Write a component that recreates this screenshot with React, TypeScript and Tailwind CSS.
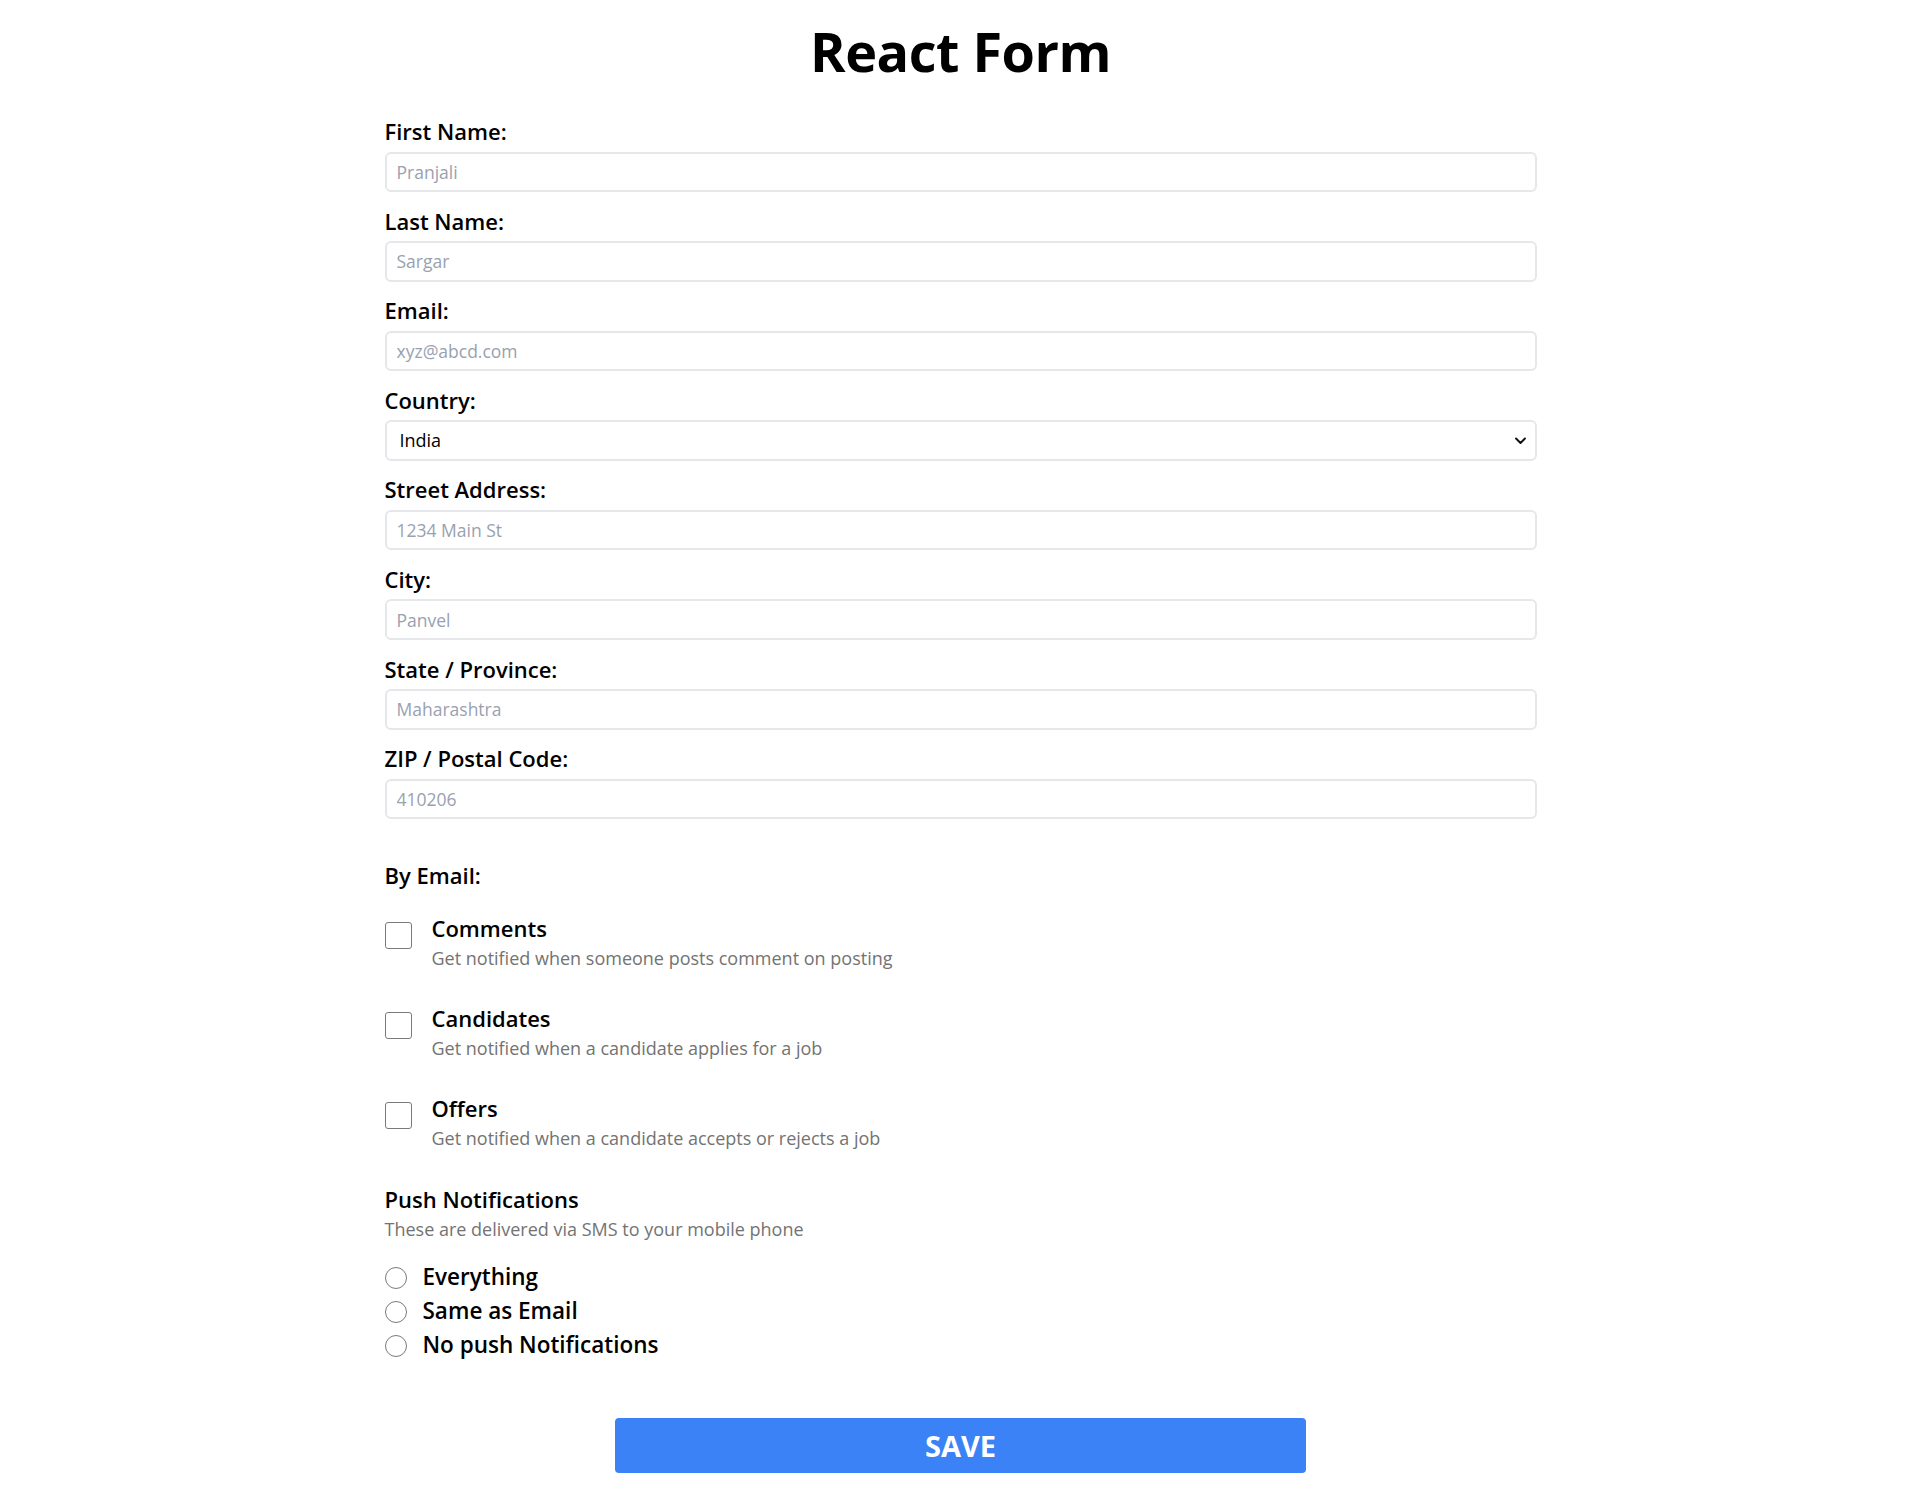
import React from "react";

const fields: { label: string; placeholder: string; type?: string }[] = [
  { label: "First Name:", placeholder: "Pranjali" },
  { label: "Last Name:", placeholder: "Sargar" },
  { label: "Email:", placeholder: "xyz@abcd.com" },
  { label: "Country:", placeholder: "", type: "select" },
  { label: "Street Address:", placeholder: "1234 Main St" },
  { label: "City:", placeholder: "Panvel" },
  { label: "State / Province:", placeholder: "Maharashtra" },
  { label: "ZIP / Postal Code:", placeholder: "410206" },
];

const checks = [
  { title: "Comments", desc: "Get notified when someone posts comment on posting" },
  { title: "Candidates", desc: "Get notified when a candidate applies for a job" },
  { title: "Offers", desc: "Get notified when a candidate accepts or rejects a job" },
];

const radios = ["Everything", "Same as Email", "No push Notifications"];

export default function App() {
  return (
    <div className="min-h-screen bg-white text-black font-['Open_Sans','Noto_Sans',sans-serif]">
      <div className="max-w-6xl mx-auto pb-[20px]">
        <h1 className="text-center text-[54px] font-bold leading-[64px] pt-[19px] mb-[32px] tracking-[-0.5px]">
          React Form
        </h1>
        <form className="flex flex-col" onSubmit={(e) => e.preventDefault()}>
          <div className="flex flex-col gap-[12.6px]">
            {fields.map((f) => (
              <div key={f.label} className="flex flex-col">
                <label className="text-[22px] font-semibold leading-[32px] mb-[4.5px]">{f.label}</label>
                {f.type === "select" ? (
                  <div className="relative">
                    <select
                      defaultValue="India"
                      className="appearance-none w-full h-[40.5px] border-2 border-gray-200 rounded-md pl-[13px] text-[18px] text-black bg-white outline-none"
                    >
                      <option>India</option>
                      <option>USA</option>
                      <option>UK</option>
                    </select>
                    <svg
                      className="absolute right-[10px] top-[14px] pointer-events-none"
                      width="13"
                      height="13"
                      viewBox="0 0 16 16"
                      fill="none"
                    >
                      <path d="M2.5 5.5 8 11l5.5-5.5" stroke="#111" strokeWidth="2.4" strokeLinecap="round" strokeLinejoin="round" />
                    </svg>
                  </div>
                ) : (
                  <input
                    type="text"
                    placeholder={f.placeholder}
                    className="w-full h-[40.5px] border-2 border-gray-200 rounded-md px-[10px] text-[17.5px] placeholder:text-gray-400 outline-none"
                  />
                )}
              </div>
            ))}
          </div>

          <p className="mt-[40.3px] text-[22px] font-semibold leading-[32px]">By Email:</p>

          <div className="mt-[21px] flex flex-col gap-[29.6px]">
            {checks.map((c) => (
              <label key={c.title} className="flex gap-[20px]">
                <input
                  type="checkbox"
                  className="appearance-none mt-[10px] w-[27px] h-[27px] shrink-0 border border-[#7a7a7a] rounded-[3px] bg-white"
                />
                <div className="flex flex-col">
                  <span className="text-[22px] font-semibold leading-[32px]">{c.title}</span>
                  <span className="text-[18px] leading-[28px] text-[#737373]">{c.desc}</span>
                </div>
              </label>
            ))}
          </div>

          <p className="mt-[31.5px] text-[22px] font-semibold leading-[32px]">Push Notifications</p>
          <p className="text-[18px] leading-[28px] text-[#737373]">These are delivered via SMS to your mobile phone</p>

          <div className="mt-[17.5px] flex flex-col">
            {radios.map((r) => (
              <label key={r} className="flex items-center gap-[16px] h-[33.7px]">
                <input
                  type="radio"
                  name="push"
                  className="appearance-none w-[22px] h-[22px] shrink-0 rounded-full border border-[#7a7a7a] bg-white mt-[2px]"
                />
                <span className="text-[22.5px] font-semibold leading-[34px]">{r}</span>
              </label>
            ))}
          </div>

          <div className="mt-[56.5px] flex justify-center">
            <button
              type="submit"
              className="w-[691px] h-[55px] bg-[#3b82f6] rounded-[4px] text-white text-[29px] font-bold leading-none"
            >
              SAVE
            </button>
          </div>
        </form>
      </div>
    </div>
  );
}
